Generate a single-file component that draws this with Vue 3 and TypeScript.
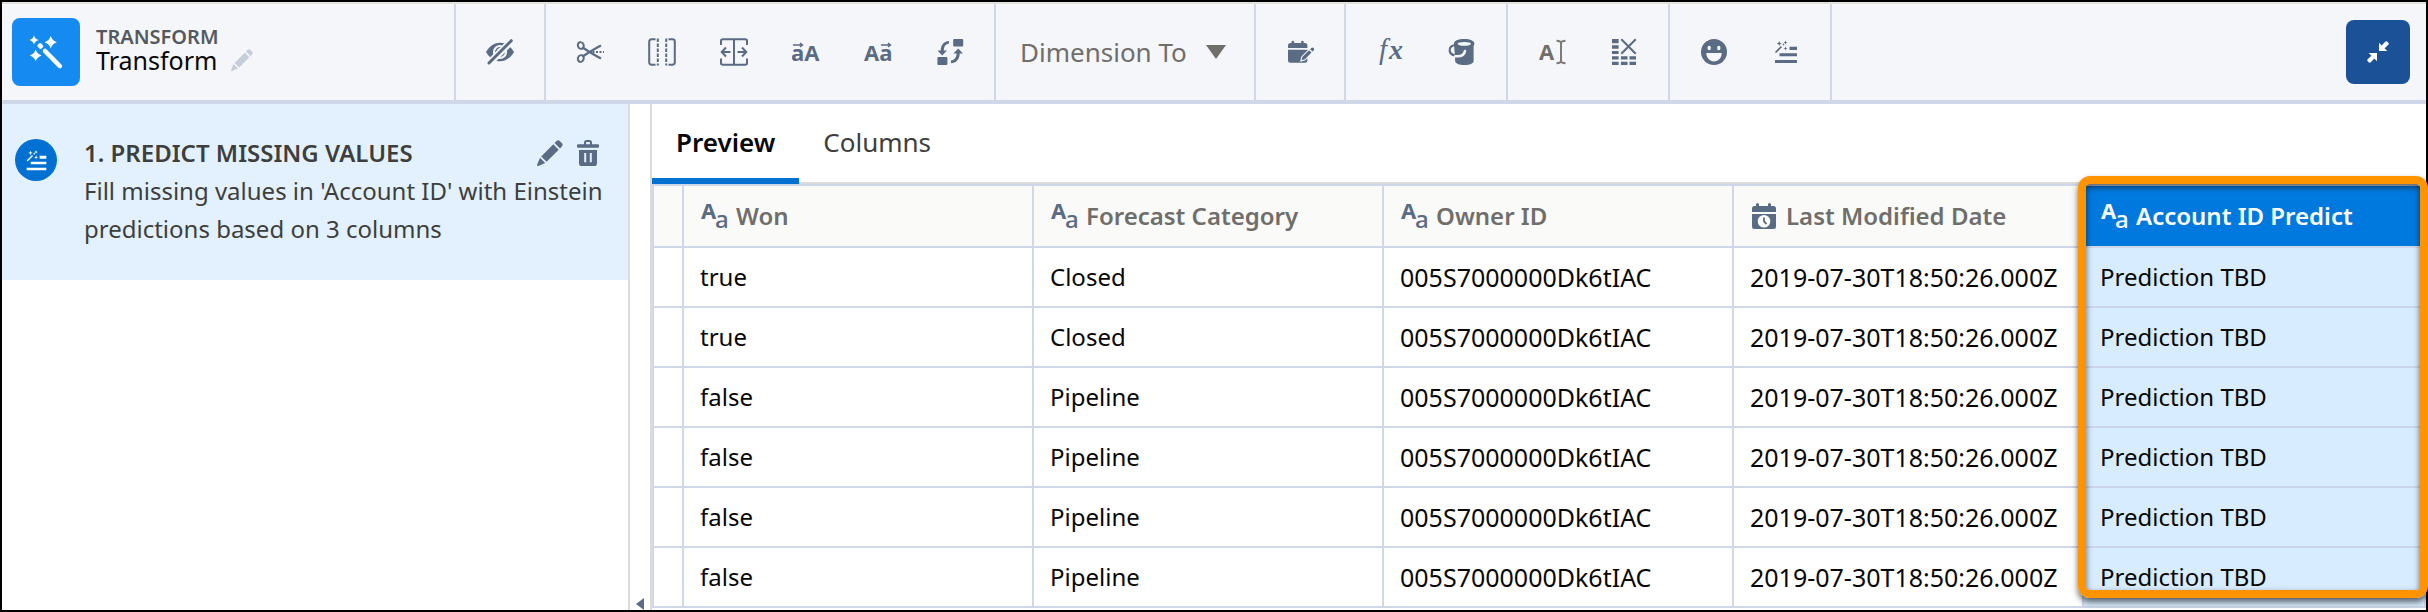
<script setup lang="ts">
import { ref } from 'vue'

interface Column {
  label: string
  type: 'text' | 'date'
  wide?: boolean
  predicted?: boolean
}

const tools = {
  drop: ['hide'],
  shape: ['cut', 'split', 'merge', 'lower', 'upper', 'replace'],
  date: ['calendar'],
  formula: ['formula', 'bucket'],
  edit: ['rename', 'remove'],
  smart: ['sentiment', 'predict'],
}

const names: Record<string, string> = {
  hide: 'Drop columns',
  cut: 'Trim',
  split: 'Split',
  merge: 'Merge',
  lower: 'Lowercase',
  upper: 'Uppercase',
  replace: 'Replace',
  calendar: 'Format dates',
  formula: 'Custom formula',
  bucket: 'Bucket',
  rename: 'Edit attributes',
  remove: 'Filter',
  sentiment: 'Detect sentiment',
  predict: 'Predict missing values',
}

const before = [tools.drop, tools.shape]
const after = [tools.date, tools.formula, tools.edit, tools.smart]

const tabs = ['Preview', 'Columns']
const activeTab = ref('Preview')
const convert = ref('Dimension To')

const columns: Column[] = [
  { label: 'Won', type: 'text' },
  { label: 'Forecast Category', type: 'text' },
  { label: 'Owner ID', type: 'text', wide: true },
  { label: 'Last Modified Date', type: 'date', wide: true },
  { label: 'Account ID Predict', type: 'text', predicted: true },
]

const rows: string[][] = [
  ['true', 'Closed'],
  ['true', 'Closed'],
  ['false', 'Pipeline'],
  ['false', 'Pipeline'],
  ['false', 'Pipeline'],
  ['false', 'Pipeline'],
].map((r) => [...r, '005S7000000Dk6tIAC', '2019-07-30T18:50:26.000Z', 'Prediction TBD'])
</script>

<template>
  <div class="frame">
    <svg class="defs" aria-hidden="true">
      <symbol id="i-hide" viewBox="0 0 28 28">
        <path d="M0 14C4 7.500 8.500 4.700 14 4.700S24 7.500 28 14C24 20.500 19.500 23.300 14 23.300S4 20.500 0 14z" fill="currentColor" />
        <circle cx="14" cy="14" r="6" fill="none" stroke="#f4f6fa" stroke-width="2.200" />
        <path d="M11.500 14a3 3 0 0 1 3-3" fill="none" stroke="#f4f6fa" stroke-width="1.500" />
        <path d="M2 26.500L26.500 2" stroke="#f4f6fa" stroke-width="7" />
        <path d="M3 25L25.300 2.700" stroke="currentColor" stroke-width="3" stroke-linecap="round" />
      </symbol>
      <symbol id="i-cut" viewBox="0 0 28 28">
        <g fill="none" stroke="currentColor" stroke-width="2">
          <ellipse cx="4.800" cy="7.500" rx="2.900" ry="3.400" transform="rotate(-20 4.800 7.500)" />
          <ellipse cx="4.800" cy="20.500" rx="2.900" ry="3.400" transform="rotate(20 4.800 20.500)" />
          <path d="M7 9.800C12 13 18 17 25 20.500M7 18.200C12 15 18 11 25 7.500" stroke-width="2.200" />
          <path d="M16.500 14H28" stroke-width="1.800" stroke-dasharray="2 1.500" />
        </g>
      </symbol>
      <symbol id="i-split" viewBox="0 0 28 28">
        <g fill="none" stroke="currentColor" stroke-width="2">
          <path d="M7.500 1.300H3.500a2.300 2.300 0 0 0-2.300 2.300v20.800a2.300 2.300 0 0 0 2.300 2.300h4M20.500 1.300h4a2.300 2.300 0 0 1 2.300 2.300v20.800a2.300 2.300 0 0 1-2.300 2.300h-4" />
          <path d="M9.800 .5v27M18.200 .5v27" stroke-dasharray="3.500 1.500" />
        </g>
      </symbol>
      <symbol id="i-merge" viewBox="0 0 28 28">
        <g fill="none" stroke="currentColor" stroke-width="2">
          <path d="M1 7V3a1.700 1.700 0 0 1 1.700-1.700h22.600A1.700 1.700 0 0 1 27 3v4M1 20.500v4.500a1.700 1.700 0 0 0 1.700 1.700h22.600A1.700 1.700 0 0 0 27 25v-4.500M14 1v26" />
          <path d="M10.500 14H2M6 9.500L1.700 14 6 18.500M17.500 14H26M22 9.500l4.300 4.500-4.300 4.500" />
        </g>
      </symbol>
      <symbol id="i-lower" viewBox="0 0 28 28">
        <text x="-1" y="22.500" class="glyph">aA</text>
        <path d="M1 7h9M8 5l2.500 2L8 9" fill="none" stroke="currentColor" stroke-width="1.400" />
      </symbol>
      <symbol id="i-upper" viewBox="0 0 28 28">
        <text x="0" y="22.500" class="glyph">Aa</text>
        <path d="M17 7h9M24 5l2.500 2L24 9" fill="none" stroke="currentColor" stroke-width="1.400" />
      </symbol>
      <symbol id="i-replace" viewBox="0 0 28 28">
        <g fill="currentColor">
          <rect x="17.200" y="1" width="10" height="7.500" rx="1" />
          <rect x="1.400" y="19" width="10" height="8" rx="1" />
          <path d="M13 3C8.500 3.200 4.800 6.500 4.700 12.500H1.500L6.200 17.500 11 12.500H7.800C7.800 8.500 10 6 13 5.600z" />
          <path d="M15 25.300C20 25 23.600 21.500 23.700 15.500H27L22.200 10.500 17.400 15.500H20.600C20.500 19.500 18.500 22 15 22.400z" />
        </g>
      </symbol>
      <symbol id="i-calendar" viewBox="0 0 28 28">
        <g fill="currentColor">
          <path d="M2 10V7.500A2.500 2.500 0 0 1 4.500 5H5.500V4a1.300 1.300 0 0 1 2.600 0v1h7V4a1.300 1.300 0 0 1 2.600 0v1h1.200a2.500 2.500 0 0 1 2.500 2.500V10z" />
          <path d="M2 11.700h19.400v.8l-6 6-1.400 5h1.500l3.900-1.200 2-2v2.200a2.200 2.200 0 0 1-2.200 2.200H4.200A2.200 2.200 0 0 1 2 22.500z" />
          <path d="M15.500 22.300l1-3.600 6.600-6.500 2.400 2.400-6.500 6.600zM24.200 11.200l1.200-1.100a1.600 1.600 0 0 1 2.300 2.300l-1.200 1.200z" />
        </g>
      </symbol>
      <symbol id="i-formula" viewBox="0 0 28 28">
        <text x="3" y="21" class="fx-f">f</text>
        <text x="13" y="21" class="fx-x">x</text>
      </symbol>
      <symbol id="i-bucket" viewBox="0 0 28 28">
        <path d="M6 5.500C6 2.800 10 1 16.200 1S26.400 2.800 26.400 5.500c0 1-.8 2-.8 3V23c0 2.500-4 4-9.200 4s-9.200-1.500-9.200-4z" fill="currentColor" />
        <ellipse cx="16.300" cy="5.800" rx="6.700" ry="1.900" fill="#f4f6fa" />
        <path d="M7.500 7C3 7.500 1.200 10 1.700 13c.4 2.500 2.500 4 5.300 4.500" fill="none" stroke="currentColor" stroke-width="2.200" />
        <path d="M7.300 18.200c5 .5 9-.7 9.700-5.200" fill="none" stroke="#f4f6fa" stroke-width="2.600" stroke-linecap="round" />
      </symbol>
      <symbol id="i-rename" viewBox="0 0 28 28">
        <text x="1" y="22" class="glyph gray">A</text>
        <path d="M18.500 2.800c2.500 0 4.500.7 4.500 2.700 0-2 2-2.700 4.500-2.700M23 5.500v17M18.500 25.200c2.500 0 4.500-.7 4.500-2.700 0 2 2 2.700 4.500 2.700" fill="none" stroke="#7d7b77" stroke-width="2" />
      </symbol>
      <symbol id="i-remove" viewBox="0 0 28 28">
        <path d="M2 1h6.600v4.300H2zM2 7.200h6.600v3.600H2zM2 12.900h6.600v3.200H2zM2 18.200h6.600v3.200H2zM2 23.700h6.600V27H2zM10.900 18.200h6.600v3.200h-6.600zM10.900 23.700h6.600V27h-6.600zM19.500 18.200h6.500v3.200h-6.500zM19.500 23.700h6.500V27h-6.500z" fill="currentColor" />
        <path d="M11.300 1.300l14.400 14.400M25.700 1.300L11.300 15.700" stroke="currentColor" stroke-width="2" />
      </symbol>
      <symbol id="i-sentiment" viewBox="0 0 28 28">
        <circle cx="14" cy="14" r="13" fill="currentColor" />
        <g fill="#f4f6fa">
          <ellipse cx="9.200" cy="10" rx="1.700" ry="2.200" />
          <ellipse cx="18.800" cy="10" rx="1.700" ry="2.200" />
          <path d="M6.300 15h15.400c0 5-3.300 8.400-7.700 8.400S6.300 20 6.300 15z" />
        </g>
      </symbol>
      <symbol id="i-predict" viewBox="0 0 28 28">
        <path d="M17.500 8.800H25V12H17.500zM7.500 15.300H25V18.200H7.500zM3 22h22v3H3z" fill="currentColor" />
        <path d="M3.500 14.500l6-6M11 7l1-1" stroke="currentColor" stroke-width="1.600" />
        <path d="M7.300 3l.7 1.800 1.800.7-1.800.7L7.300 8l-.7-1.800-1.800-.7 1.800-.7zM13.500 2.500l.6 1.400 1.400.6-1.400.6-.6 1.400-.6-1.400-1.400-.6 1.400-.6zM13.500 8.500l.6 1.400 1.400.6-1.400.6-.6 1.400-.6-1.400-1.400-.6 1.400-.6z" fill="currentColor" />
      </symbol>
      <symbol id="i-pencil" viewBox="0 0 26 26">
        <path d="M4.200 16.400L16.300 4.300l5.400 5.400L9.600 21.800zM17.600 3l1.900-1.900c1-1 2.300-1 3.200-.1l2.300 2.300c.9.900.9 2.200-.1 3.200L23 8.400zM3 17.800l5.200 5.200-6.900 2.900c-.8.300-1.500-.4-1.200-1.200z" fill="currentColor" />
      </symbol>
      <symbol id="i-trash" viewBox="0 0 22 26">
        <path d="M1 4.300h6V2.600A2.600 2.600 0 0 1 9.600 0h2.800A2.600 2.600 0 0 1 15 2.600v1.700h6a1 1 0 0 1 1 1v1.400a1 1 0 0 1-1 1H1a1 1 0 0 1-1-1V5.300a1 1 0 0 1 1-1zM9 4.300h4V2.800a.8.800 0 0 0-.8-.8H9.800a.8.800 0 0 0-.8.800zM2 10h18v13.200A2.800 2.800 0 0 1 17.200 26H4.800A2.800 2.800 0 0 1 2 23.200zM7.200 13v9.200h2V13zM12.800 13v9.200h2V13z" fill="currentColor" fill-rule="evenodd" />
      </symbol>
      <symbol id="i-text" viewBox="0 0 28 28">
        <text x="1" y="17" class="type-a">A</text>
        <text x="15" y="26" class="type-b">a</text>
      </symbol>
      <symbol id="i-date" viewBox="0 0 28 28">
        <path d="M2 10V6.500A2.500 2.500 0 0 1 4.500 4H6V2.500a1.500 1.500 0 0 1 3 0V4h9V2.500a1.500 1.500 0 0 1 3 0V4h2.500A2.500 2.500 0 0 1 26 6.500V10zM2 12h24v12.500a2.500 2.500 0 0 1-2.500 2.500h-19A2.500 2.500 0 0 1 2 24.500zM14 13a6.300 6.300 0 1 0 0 12.600 6.300 6.300 0 0 0 0-12.600z" fill="currentColor" fill-rule="evenodd" />
        <path d="M14 15.500v4l2.500 2.500" fill="none" stroke="currentColor" stroke-width="1.800" />
      </symbol>
      <symbol id="i-wand" viewBox="0 0 68 68">
        <g fill="#fff">
          <path d="M22 17.500q1 3.500 4.500 4.500-3.500 1-4.500 4.500-1-3.500-4.500-4.500 3.500-1 4.500-4.500zM38.700 18q1.500 4.700 6.200 6.200-4.700 1.500-6.200 6.200-1.500-4.700-6.200-6.200 4.700-1.500 6.200-6.200zM23.700 31.500q1.400 4.500 5.900 5.900-4.500 1.400-5.900 5.900-1.400-4.500-5.900-5.900 4.500-1.400 5.900-5.900z" />
          <rect x="25.600" y="25.600" width="5.400" height="4.800" rx="1.500" transform="rotate(45 28.300 28)" />
        </g>
        <path d="M33 33l14.800 15" stroke="#fff" stroke-width="4.600" stroke-linecap="round" />
      </symbol>
      <symbol id="i-shrink" viewBox="0 0 22 22">
        <path d="M12 1.700L14.700 4.400 18.200 .7Q19.300-.2 20.300 .7L21.300 1.700Q22.200 2.700 21.300 3.800L17.600 7.300 20.300 10H12zM10 20.300L7.300 17.600 3.800 21.300Q2.700 22.200 1.700 21.300L.7 20.300Q-.2 19.300 .7 18.200L4.400 14.700 1.700 12H10z" fill="#fff" />
      </symbol>
    </svg>

    <header class="toolbar">
      <div class="brand">
        <span class="logo"><svg><use href="#i-wand" /></svg></span>
        <div class="titles">
          <p class="kind">TRANSFORM</p>
          <h1 class="name">
            Transform
            <button type="button" class="plain rename" aria-label="Rename"><svg><use href="#i-pencil" /></svg></button>
          </h1>
        </div>
      </div>
      <div v-for="(group, g) in before" :key="g" class="group">
        <button v-for="t in group" :key="t" type="button" class="tool" :aria-label="names[t]">
          <svg><use :href="'#i-' + t" /></svg>
        </button>
      </div>
      <label class="convert">
        <select v-model="convert" aria-label="Convert column type">
          <option>Dimension To</option>
        </select>
        <svg class="caret" viewBox="0 0 20 14" aria-hidden="true"><path d="M0 0h20L10 14z" fill="currentColor" /></svg>
      </label>
      <div v-for="(group, g) in after" :key="'a' + g" class="group">
        <button v-for="t in group" :key="t" type="button" class="tool" :aria-label="names[t]">
          <svg><use :href="'#i-' + t" /></svg>
        </button>
      </div>
      <button type="button" class="shrink" aria-label="Collapse"><svg><use href="#i-shrink" /></svg></button>
    </header>

    <div class="body">
      <aside class="steps">
        <article class="step">
          <span class="badge"><svg><use href="#i-predict" /></svg></span>
          <div class="step-text">
            <div class="step-head">
              <h2>1. PREDICT MISSING VALUES</h2>
              <div class="actions">
                <button type="button" class="plain edit" aria-label="Edit step"><svg><use href="#i-pencil" /></svg></button>
                <button type="button" class="plain delete" aria-label="Delete step"><svg><use href="#i-trash" /></svg></button>
              </div>
            </div>
            <p>Fill missing values in 'Account ID' with Einstein predictions based on 3 columns</p>
          </div>
        </article>
      </aside>
      <div class="gutter">
        <button type="button" class="plain" aria-label="Collapse steps">
          <svg viewBox="0 0 8 12"><path d="M8 0v12L0 6z" fill="currentColor" /></svg>
        </button>
      </div>
      <main class="main">
        <nav class="tabs" role="tablist">
          <button
            v-for="tab in tabs"
            :key="tab"
            type="button"
            role="tab"
            class="tab"
            :class="{ active: tab === activeTab }"
            :aria-selected="tab === activeTab"
            @click="activeTab = tab"
          >{{ tab }}</button>
        </nav>
        <div class="grid-area">
          <div class="grid-clip">
            <table>
              <colgroup>
                <col class="c-mark" />
                <col v-for="c in columns" :key="c.label" :class="c.predicted ? 'c-last' : 'c-data'" />
              </colgroup>
              <thead>
                <tr>
                  <td></td>
                  <th v-for="c in columns" :key="c.label" scope="col" :class="{ predicted: c.predicted }">
                    <span class="head">
                      <svg><use :href="'#i-' + c.type" /></svg>{{ c.label }}
                    </span>
                  </th>
                </tr>
              </thead>
              <tbody>
                <tr v-for="(row, r) in rows" :key="r">
                  <td></td>
                  <td
                    v-for="(cell, i) in row"
                    :key="i"
                    :class="{ predicted: columns[i].predicted, wide: columns[i].wide }"
                  >{{ cell }}</td>
                </tr>
              </tbody>
            </table>
          </div>
          <div class="highlight"></div>
        </div>
      </main>
    </div>
  </div>
</template>

<style>
body {
  margin: 0;
}
</style>

<style scoped>
* {
  box-sizing: border-box;
}
.frame {
  display: flex;
  flex-direction: column;
  height: 100vh;
  padding: 2px;
  overflow: hidden;
  background: #000;
  font-family: "Noto Sans", "Open Sans", sans-serif;
  color: #080707;
}
svg {
  display: block;
  overflow: visible;
}
svg.defs {
  display: none;
}
p,
h1,
h2 {
  margin: 0;
}
button {
  font: inherit;
  padding: 0;
  border: 0;
  background: none;
  cursor: pointer;
}
.glyph {
  font: 700 22px "Open Sans", "Noto Sans", sans-serif;
  fill: currentColor;
}
.gray {
  fill: #706e6b;
}
.fx-f {
  font: italic 400 29px "Liberation Serif", serif;
  fill: currentColor;
}
.fx-x {
  font: italic 700 28px "Liberation Serif", serif;
  fill: currentColor;
}
.type-a {
  font: 700 22px "Noto Sans", sans-serif;
  fill: currentColor;
}
.type-b {
  font: 500 24px "Noto Sans", sans-serif;
  fill: currentColor;
}

.toolbar {
  display: flex;
  flex: none;
  height: 102px;
  border-top: 2px solid #e3e2dc;
  border-bottom: 4px solid #cfd7e8;
  background: #f4f6fa;
  color: #5a6b84;
}
.brand {
  display: flex;
  gap: 16px;
  align-items: center;
  width: 454px;
  padding-left: 10px;
  border-right: 2px solid #cfd7e8;
}
.logo {
  width: 68px;
  height: 68px;
  border-radius: 8px;
  background: #158af0;
}
.logo svg {
  width: 68px;
  height: 68px;
}
.titles {
  padding-bottom: 6px;
}
.kind {
  font-size: 20px;
  line-height: 22px;
  font-weight: 600;
  color: #54595f;
}
.name {
  display: flex;
  gap: 14px;
  align-items: center;
  font-size: 25px;
  line-height: 24px;
  font-weight: 400;
  color: #080707;
}
.rename svg {
  width: 22px;
  height: 22px;
}
.group {
  display: flex;
  padding: 0 8px;
  border-right: 2px solid #cfd7e8;
}
.tool {
  display: flex;
  align-items: center;
  justify-content: center;
  width: 72px;
  color: inherit;
}
.tool svg {
  width: 28px;
  height: 28px;
}
.convert {
  display: flex;
  align-items: center;
  justify-content: space-between;
  width: 260px;
  padding: 0 28px 0 24px;
  border-right: 2px solid #cfd7e8;
  color: #706e6b;
}
.convert select {
  appearance: none;
  padding: 0;
  border: 0;
  background: none;
  font: inherit;
  font-size: 26px;
  color: inherit;
}
.caret {
  width: 20px;
  height: 14px;
}
.shrink {
  display: flex;
  align-items: center;
  justify-content: center;
  width: 64px;
  height: 64px;
  margin: auto 16px auto auto;
  border-radius: 8px;
  background: #1b5297;
}
.shrink svg {
  width: 22px;
  height: 22px;
}

.body {
  display: flex;
  flex: 1;
  min-height: 0;
  background: #fff;
}
.steps {
  flex: none;
  width: 628px;
  border-right: 2px solid #dddbda;
}
.step {
  display: flex;
  gap: 27px;
  padding: 30px 16px 32px 13px;
  background: #e3f1ff;
}
.badge {
  display: flex;
  flex: none;
  align-items: center;
  justify-content: center;
  width: 42px;
  height: 42px;
  margin-top: 5px;
  border-radius: 50%;
  background: #0070d2;
  color: #fff;
}
.badge svg {
  width: 25px;
  height: 25px;
}
.step-text {
  flex: 1;
  font-size: 24px;
  line-height: 38px;
  color: #3e3e3c;
}
.step-head {
  display: flex;
  align-items: center;
  justify-content: space-between;
  padding-right: 13px;
}
h2 {
  font-size: 24px;
  font-weight: 600;
  white-space: nowrap;
}
.actions {
  display: flex;
  gap: 14px;
}
.plain {
  color: #5a6b84;
}
.plain.rename {
  color: #c5cdd8;
}
.edit svg {
  width: 26px;
  height: 26px;
}
.delete svg {
  width: 22px;
  height: 26px;
}
.gutter {
  display: flex;
  flex: none;
  flex-direction: column;
  justify-content: flex-end;
  align-items: center;
  width: 22px;
  border-right: 2px solid #dddbda;
}
.gutter svg {
  width: 8px;
  height: 12px;
}
.main {
  display: flex;
  flex: 1;
  flex-direction: column;
  min-width: 0;
}
.tabs {
  display: flex;
  flex: none;
  height: 80px;
  border-bottom: 2px solid #dddbda;
}
.tab {
  height: 80px;
  padding: 2px 24px 0;
  border-bottom: 6px solid transparent;
  font-size: 26px;
  color: #3e3e3c;
}
.tab.active {
  border-color: #0070d2;
  font-weight: 600;
  color: #080707;
}
.grid-area {
  position: relative;
  flex: 1;
  min-height: 0;
}
.grid-clip {
  height: 100%;
  overflow: hidden;
}
table {
  width: 100%;
  table-layout: fixed;
  border-collapse: separate;
  border-spacing: 0;
  border-top: 2px solid #cfd7e8;
  border-left: 2px solid #cfd7e8;
}
.c-mark {
  width: 30px;
}
.c-data {
  width: 350px;
}
td,
th {
  height: 60px;
  padding: 0 16px;
  border-right: 2px solid #cfd7e8;
  border-bottom: 2px solid #cfd7e8;
  font-size: 24px;
  line-height: 32px;
  font-weight: 400;
  text-align: left;
  white-space: nowrap;
}
thead td,
thead th {
  height: 62px;
  background: #fafaf9;
  font-weight: 600;
  color: #706e6b;
}
td:first-child {
  padding: 0;
}
.wide {
  font-size: 25px;
}
tbody .predicted {
  border-color: #ccd5e8;
  background: #d8ecff;
}
thead .predicted {
  background: #0079df;
  color: #fff;
}
.head {
  display: flex;
  gap: 8px;
  align-items: center;
}
.head svg {
  width: 28px;
  height: 28px;
  color: #5a6b84;
}
.predicted svg {
  color: #fff;
}
.highlight {
  position: absolute;
  top: -8px;
  right: -2px;
  bottom: 12px;
  width: 350px;
  border: 8px solid #ff9300;
  border-radius: 12px;
  box-shadow: 0 4px 6px rgba(0, 0, 0, 0.6), inset 0 3px 6px rgba(0, 0, 0, 0.6);
  pointer-events: none;
}
</style>
